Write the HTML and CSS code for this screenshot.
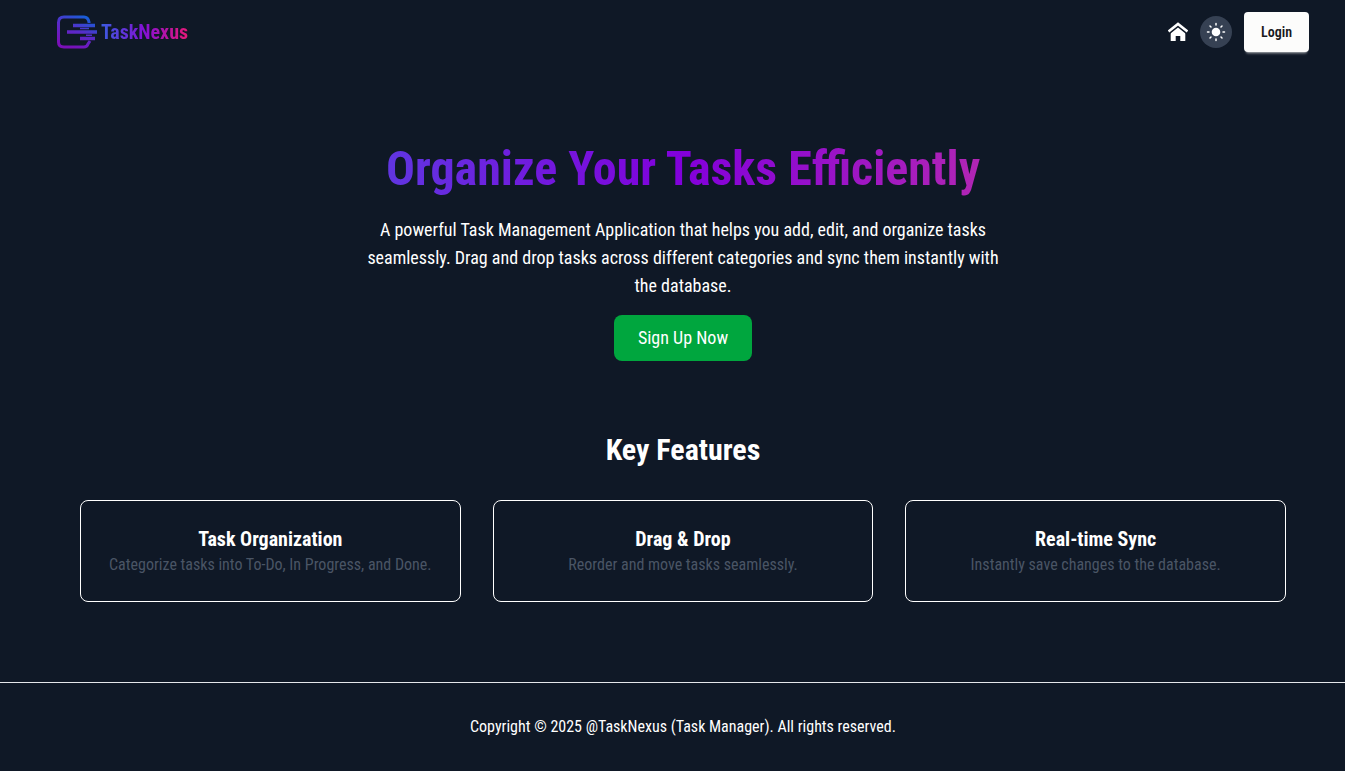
FILE: index.html
```html
<!DOCTYPE html>
<html lang="en">
<head>
<meta charset="utf-8">
<meta name="viewport" content="width=device-width, initial-scale=1">
<title>TaskNexus</title>
<link rel="stylesheet" href="styles.css">
</head>
<body>
<header class="navbar">
  <a class="brand" href="#">
    <svg class="brand-mark" viewBox="0 0 42 36" aria-hidden="true">
      <defs>
        <linearGradient id="mark" x1="30" y1="2" x2="16" y2="34" gradientUnits="userSpaceOnUse">
          <stop offset="0" stop-color="#1560d8"/>
          <stop offset=".5" stop-color="#5a2ac8"/>
          <stop offset="1" stop-color="#7a10b8"/>
        </linearGradient>
      </defs>
      <g fill="none" stroke="url(#mark)" stroke-width="3">
        <path d="M33 9V8Q32 3 28 3H8Q2.500 3 2.500 8.500V28Q2.500 33 8 33H28Q31 33 32 30L34 27"/>
        <path d="M17 11.500H39M11 18H41M24 24.500H39" stroke-width="3.500"/>
        <path d="M24 14.500H33M30 21.200H36" stroke-width="1.500"/>
      </g>
    </svg>
    <span class="brand-name">TaskNexus</span>
  </a>
  <nav class="actions">
    <a class="home" href="#" aria-label="Home">
      <svg viewBox="0 0 20 20" aria-hidden="true">
        <path d="M2.700 10.500 10 4.700l7.300 5.800V19h-5v-5H7.700v5h-5z" fill="currentColor"/>
        <path d="M0 11 10 3l10 8" fill="none" stroke="#0f1826" stroke-width="4"/>
        <path d="M.5 9.500 10 2l9.500 7.500" fill="none" stroke="currentColor" stroke-width="2.600"/>
      </svg>
    </a>
    <button class="theme" type="button" aria-label="Toggle theme">
      <svg viewBox="0 0 20 20" aria-hidden="true">
        <circle cx="10" cy="10" r="4.300" fill="currentColor"/>
        <path d="M10 1.500v1.500M10 17v1.500M1.500 10h1.500M17 10h1.500M4 4l1 1M15 15l1 1M4 16l1-1M15 5l1-1" stroke="currentColor" stroke-width="1.500" stroke-linecap="round"/>
      </svg>
    </button>
    <button class="login" type="button">Login</button>
  </nav>
</header>
<main class="content">
  <section class="hero">
    <h1 class="headline">Organize Your Tasks Efficiently</h1>
    <p class="lead">A powerful Task Management Application that helps you add, edit, and organize tasks seamlessly. Drag and drop tasks across different categories and sync them instantly with the database.</p>
    <a class="signup" href="#">Sign Up Now</a>
  </section>
  <section class="features">
    <h2 class="section-title">Key Features</h2>
    <div class="cards">
      <article class="card">
        <h3 class="card-title">Task Organization</h3>
        <p class="card-text">Categorize tasks into To-Do, In Progress, and Done.</p>
      </article>
      <article class="card">
        <h3 class="card-title">Drag &amp; Drop</h3>
        <p class="card-text">Reorder and move tasks seamlessly.</p>
      </article>
      <article class="card">
        <h3 class="card-title">Real-time Sync</h3>
        <p class="card-text">Instantly save changes to the database.</p>
      </article>
    </div>
  </section>
</main>
<footer class="footer">
  <p class="copyright">Copyright © 2025 @TaskNexus (Task Manager). All rights reserved.</p>
</footer>
</body>
</html>
```
FILE: styles.css
```css
* {
  box-sizing: border-box;
  margin: 0;
}

body {
  min-height: 100vh;
  display: flex;
  flex-direction: column;
  background: #0f1826;
  color: #fff;
  font-family: "Roboto Condensed", Roboto, sans-serif;
  font-size: 16px;
  line-height: 24px;
}

a {
  color: inherit;
  text-decoration: none;
}

button {
  border: 0;
  font: inherit;
  cursor: pointer;
}

.navbar {
  display: flex;
  align-items: center;
  justify-content: space-between;
  min-height: 64px;
  padding: 12px 36px 12px 56px;
}

.brand {
  display: flex;
  align-items: center;
  gap: 3px;
}

.brand-mark {
  width: 42px;
  height: 36px;
}

.brand-name,
.headline {
  background: linear-gradient(to right, #3e6ce6, #8200db, #e24c8c);
  background-clip: text;
  -webkit-background-clip: text;
  color: transparent;
}

.brand-name {
  background-image: linear-gradient(to right, #3a5ce0, #8410d4, #e81878);
  font-size: 20px;
  font-weight: 700;
  line-height: 28px;
}

.actions {
  display: flex;
  align-items: center;
  gap: 12px;
}

.home svg {
  display: block;
  width: 20px;
  height: 20px;
}

.theme {
  display: grid;
  place-items: center;
  width: 32px;
  height: 32px;
  padding: 0;
  border-radius: 50%;
  background: #364153;
  color: #fff;
}

.theme svg {
  width: 20px;
  height: 20px;
}

.login {
  height: 40px;
  padding: 0 17px;
  border-radius: 4px;
  background: #fcfcfb;
  box-shadow: 0 3px 2px -2px #ffffff80, 0 4px 3px -2px #ffffff30;
  color: #18181b;
  font-size: 14px;
  font-weight: 600;
}

.content {
  padding: 80px 59px 80px 80px;
}

.hero {
  display: flex;
  flex-direction: column;
  align-items: center;
  text-align: center;
}

.headline {
  align-self: stretch;
  font-size: 48px;
  font-weight: 700;
  line-height: 50px;
  padding-bottom: 4px;
}

.lead {
  max-width: 640px;
  margin: 18px 0 15px;
  font-size: 18px;
  line-height: 28px;
}

.signup {
  padding: 9px 24px;
  border-radius: 8px;
  background: #00a63e;
  font-size: 18px;
  line-height: 28px;
}

.features {
  margin-top: 71px;
  text-align: center;
}

.section-title {
  font-size: 30px;
  font-weight: 700;
  line-height: 36px;
}

.cards {
  display: grid;
  grid-template-columns: repeat(auto-fit, minmax(280px, 1fr));
  gap: 32px;
  margin-top: 32px;
}

.card {
  padding: 24px;
  border: 1px solid #fff;
  border-radius: 8px;
}

.card-title {
  font-size: 20px;
  font-weight: 700;
  line-height: 28px;
}

.card-text {
  color: #4a5565;
}

.footer {
  padding: 32px 0 32px 21px;
  border-top: 1px solid #e5e7eb;
  text-align: center;
}
```
